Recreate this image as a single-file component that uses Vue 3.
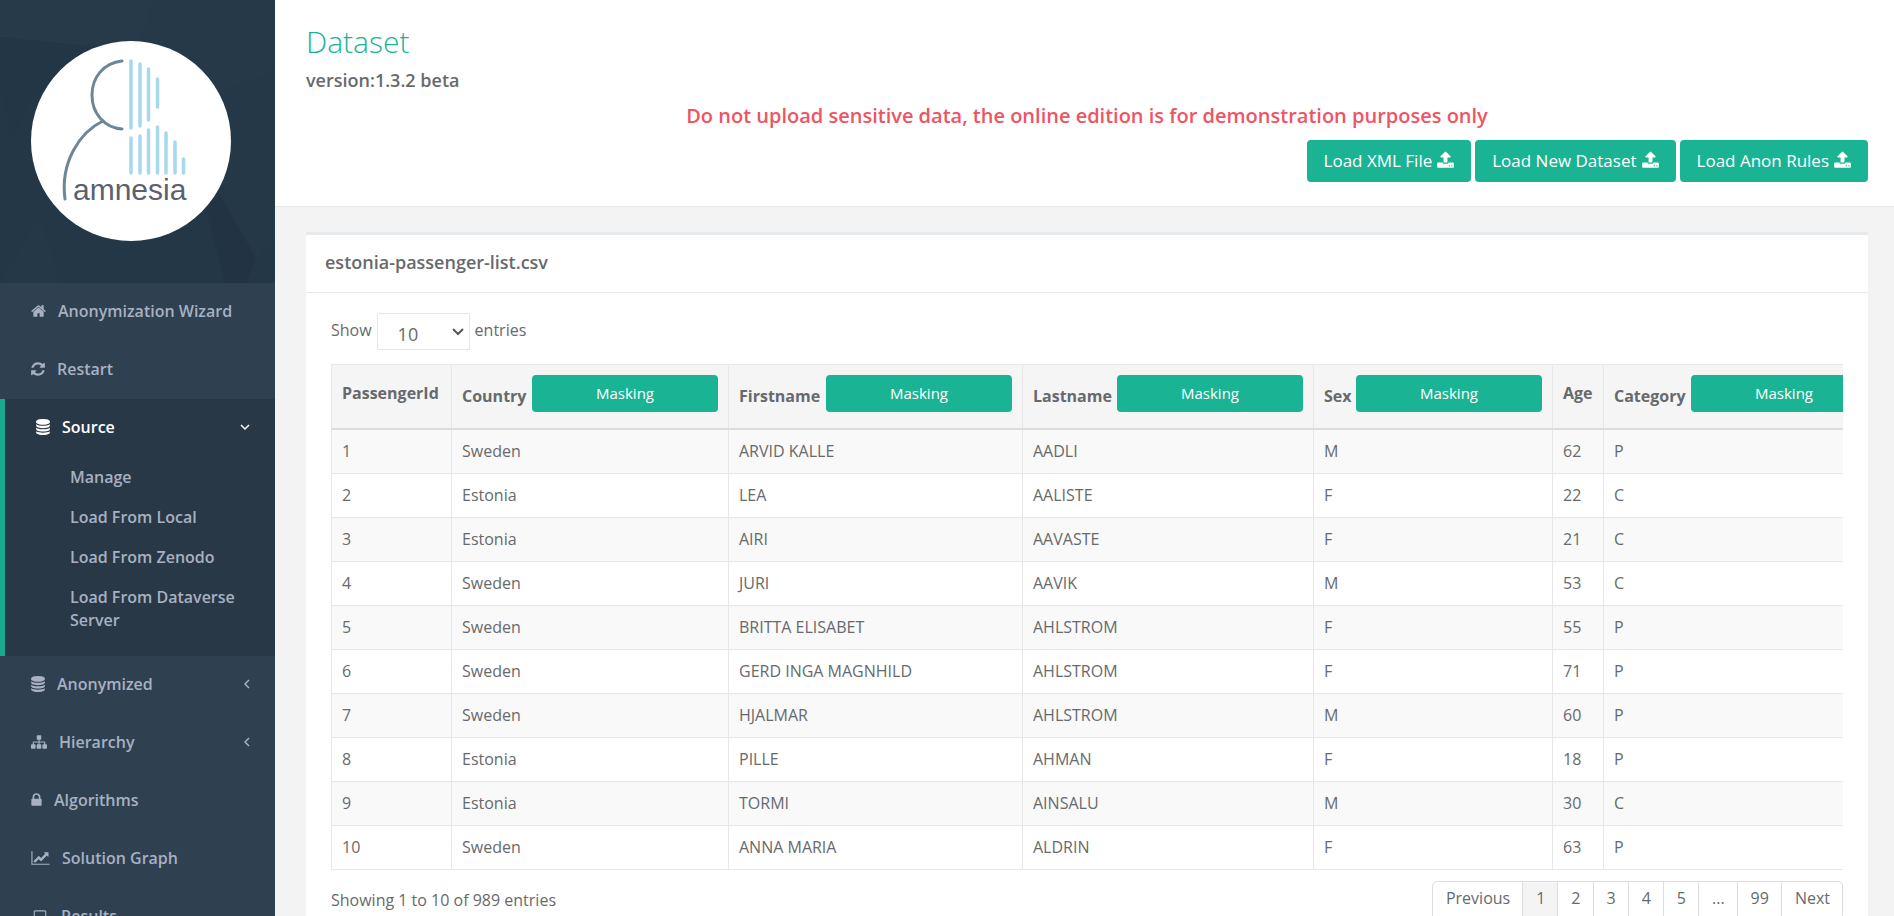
<script setup>
import { ref } from 'vue'

const icons = {
  home: {
    box: '64 0 1664 1792', w: 15,
    d: 'M1472 992v480q0 26-19 45t-45 19h-384v-384h-256v384h-384q-26 0-45-19t-19-45v-480q0-1 .5-3t.5-3l575-474 575 474q1 2 1 6zm223-69l-62 74q-8 9-21 11h-3q-13 0-21-7l-692-577-692 577q-12 8-24 7-13-2-21-11l-62-74q-8-10-7-23.5t11-21.5l719-599q32-26 76-26t76 26l244 204v-195q0-14 9-23t23-9h192q14 0 23 9t9 23v408l219 182q10 8 11 21.5t-7 23.5z',
  },
  refresh: {
    box: '128 0 1536 1792', w: 14,
    d: 'M1639 1056q0 5-1 7-64 268-268 434.5t-478 166.5q-146 0-282.5-55t-243.5-157l-129 129q-19 19-45 19t-45-19-19-45v-448q0-26 19-45t45-19h448q26 0 45 19t19 45-19 45l-137 137q71 66 161 102t187 36q134 0 250-65t186-179q11-17 53-117 8-23 30-23h192q13 0 22.5 9.5t9.5 22.5zm25-800v448q0 26-19 45t-45 19h-448q-26 0-45-19t-19-45 19-45l138-138q-148-137-349-137-134 0-250 65t-186 179q-11 17-53 117-8 23-30 23h-199q-13 0-22.5-9.5t-9.5-22.5v-7q65-268 270-434.5t480-166.5q146 0 284 55.5t245 156.5l130-129q19-19 45-19t45 19 19 45z',
  },
  database: {
    box: '128 0 1536 1792', w: 14,
    d: 'M896 768q237 0 443-43t325-127v170q0 69-103 128t-280 93.5-385 34.5-385-34.5-280-93.5-103-128v-170q119 84 325 127t443 43zm0 768q237 0 443-43t325-127v170q0 69-103 128t-280 93.5-385 34.5-385-34.5-280-93.5-103-128v-170q119 84 325 127t443 43zm0-384q237 0 443-43t325-127v170q0 69-103 128t-280 93.5-385 34.5-385-34.5-280-93.5-103-128v-170q119 84 325 127t443 43zm0-1152q208 0 385 34.5t280 93.5 103 128v128q0 69-103 128t-280 93.5-385 34.5-385-34.5-280-93.5-103-128v-128q0-69 103-128t280-93.5 385-34.5z',
  },
  sitemap: {
    box: '0 0 1792 1792', w: 16,
    d: 'M1792 1248v320q0 40-28 68t-68 28h-320q-40 0-68-28t-28-68v-320q0-40 28-68t68-28h96v-192h-512v192h96q40 0 68 28t28 68v320q0 40-28 68t-68 28h-320q-40 0-68-28t-28-68v-320q0-40 28-68t68-28h96v-192h-512v192h96q40 0 68 28t28 68v320q0 40-28 68t-68 28h-320q-40 0-68-28t-28-68v-320q0-40 28-68t68-28h96v-192q0-52 38-90t90-38h512v-192h-96q-40 0-68-28t-28-68v-320q0-40 28-68t68-28h320q40 0 68 28t28 68v320q0 40-28 68t-68 28h-96v192h512q52 0 90 38t38 90v192h96q40 0 68 28t28 68z',
  },
  lock: {
    box: '320 0 1152 1792', w: 11,
    d: 'M640 768h512v-192q0-106-75-181t-181-75-181 75-75 181v192zm832 96v576q0 40-28 68t-68 28h-960q-40 0-68-28t-28-68v-576q0-40 28-68t68-28h32v-192q0-184 132-316t316-132 316 132 132 316v192h32q40 0 68 28t28 68z',
  },
  chart: {
    box: '0 0 2048 1792', w: 19,
    d: 'M2048 1536v128h-2048v-1536h128v1408h1920zm-128-1248v435q0 21-19.5 29.5t-35.5-7.5l-121-121-633 633q-10 10-23 10t-23-10l-233-233-416 416-192-192 585-585q10-10 23-10t23 10l233 233 464-464-121-121q-16-16-7.5-35.5t29.5-19.5h435q14 0 23 9t9 23z',
  },
  laptop: {
    box: '0 0 1920 1792', w: 18,
    d: 'M416 1280q-66 0-113-47t-47-113v-704q0-66 47-113t113-47h1088q66 0 113 47t47 113v704q0 66-47 113t-113 47h-1088zm-32-864v704q0 13 9.5 22.5t22.5 9.5h1088q13 0 22.5-9.5t9.5-22.5v-704q0-13-9.5-22.5t-22.5-9.5h-1088q-13 0-22.5 9.5t-9.5 22.5zm1376 928h160v96q0 40-47 68t-113 28h-1600q-66 0-113-28t-47-68v-96h1760z',
  },
}
const uploadPath = 'M1344 1472q0-26-19-45t-45-19-45 19-19 45 19 45 45 19 45-19 19-45zm256 0q0-26-19-45t-45-19-45 19-19 45 19 45 45 19 45-19 19-45zm128-224v320q0 40-28 68t-68 28h-1472q-40 0-68-28t-28-68v-320q0-40 28-68t68-28h427q21 56 70.5 92t110.5 36h256q61 0 110.5-36t70.5-92h427q40 0 68 28t28 68zm-325-648q-17 40-59 40h-256v448q0 26-19 45t-45 19h-256q-26 0-45-19t-19-45v-448h-256q-42 0-59-40-17-39 14-69l448-448q18-19 45-19t45 19l448 448q31 30 14 69z'

const nav = [
  { label: 'Anonymization Wizard', icon: 'home' },
  { label: 'Restart', icon: 'refresh' },
  {
    label: 'Source', icon: 'database', active: true,
    children: ['Manage', 'Load From Local', 'Load From Zenodo', 'Load From Dataverse Server'],
  },
  { label: 'Anonymized', icon: 'database', more: true },
  { label: 'Hierarchy', icon: 'sitemap', more: true },
  { label: 'Algorithms', icon: 'lock' },
  { label: 'Solution Graph', icon: 'chart' },
  { label: 'Results', icon: 'laptop' },
]

const loaders = ['Load XML File', 'Load New Dataset', 'Load Anon Rules']

const columns = [
  { name: 'PassengerId', cls: 'c-id' },
  { name: 'Country', cls: 'c-country', mask: true },
  { name: 'Firstname', cls: 'c-first', mask: true },
  { name: 'Lastname', cls: 'c-last', mask: true },
  { name: 'Sex', cls: 'c-sex', mask: true },
  { name: 'Age', cls: 'c-age' },
  { name: 'Category', cls: 'c-category', mask: true },
]

const rows = [
  [1, 'Sweden', 'ARVID KALLE', 'AADLI', 'M', 62, 'P'],
  [2, 'Estonia', 'LEA', 'AALISTE', 'F', 22, 'C'],
  [3, 'Estonia', 'AIRI', 'AAVASTE', 'F', 21, 'C'],
  [4, 'Sweden', 'JURI', 'AAVIK', 'M', 53, 'C'],
  [5, 'Sweden', 'BRITTA ELISABET', 'AHLSTROM', 'F', 55, 'P'],
  [6, 'Sweden', 'GERD INGA MAGNHILD', 'AHLSTROM', 'F', 71, 'P'],
  [7, 'Sweden', 'HJALMAR', 'AHLSTROM', 'M', 60, 'P'],
  [8, 'Estonia', 'PILLE', 'AHMAN', 'F', 18, 'P'],
  [9, 'Estonia', 'TORMI', 'AINSALU', 'M', 30, 'C'],
  [10, 'Sweden', 'ANNA MARIA', 'ALDRIN', 'F', 63, 'P'],
]

const pages = ['Previous', '1', '2', '3', '4', '5', '...', '99', 'Next']
const pageSize = ref('10')
</script>

<template>
  <div class="layout">
    <nav class="sidebar" aria-label="Main menu">
      <div class="brand">
        <svg class="facets" viewBox="0 0 275 283" preserveAspectRatio="none" aria-hidden="true">
          <rect width="275" height="283" fill="#243746" />
          <path d="M0 0H155L140 45L95 47L0 37Z" fill="#273a49" />
          <path d="M155 0H275V70L215 95L140 45Z" fill="#263949" />
          <path d="M275 70V207L220 200L200 100Z" fill="#253848" />
          <path d="M0 37L95 47L30 100L12 140L0 85Z" fill="#233645" />
          <path d="M205 205L220 195L256 258L246 283H225Z" fill="#223444" />
          <path d="M220 195L275 175V240L256 258Z" fill="#253847" />
          <path d="M0 283L40 215L60 283Z" fill="#253847" />
        </svg>
        <svg class="logo" viewBox="0 0 200 200" role="img" aria-label="amnesia">
          <circle cx="100" cy="100" r="100" fill="#fff" />
          <g fill="none" stroke="#6b8798" stroke-width="3" stroke-linecap="round">
            <path d="M91 20C72 22 61 37 61 54C61 73 74 87 91 88" />
            <path d="M72 80C49 91 29 121 34 158" />
          </g>
          <g stroke="#a6d8ee" stroke-width="3.500" stroke-linecap="round">
            <path d="M100 20V87M109 23V85M117.500 28V79M126.500 38V66" />
            <path d="M100 97V132M109 95V132M117.500 89V132M126.500 86V132M135 92V132M144 101V132M152.500 118V132" />
          </g>
          <text x="42" y="159" class="logo-text">amnesia</text>
        </svg>
      </div>
      <ul class="menu">
        <li v-for="item in nav" :key="item.label" :class="{ active: item.active }">
          <a href="#" class="menu-link">
            <svg class="icon" :width="icons[item.icon].w" height="16" :viewBox="icons[item.icon].box" aria-hidden="true">
              <path :d="icons[item.icon].d" />
            </svg>
            <span>{{ item.label }}</span>
            <svg v-if="item.active" class="arrow" width="10" height="10" viewBox="0 0 10 10" aria-hidden="true">
              <path d="M1 3L5 7L9 3" />
            </svg>
            <svg v-else-if="item.more" class="arrow" width="6" height="10" viewBox="0 0 6 10" aria-hidden="true">
              <path d="M5 1L1 5L5 9" />
            </svg>
          </a>
          <ul v-if="item.children" class="submenu">
            <li v-for="child in item.children" :key="child"><a href="#">{{ child }}</a></li>
          </ul>
        </li>
      </ul>
    </nav>

    <main class="page">
      <header class="heading">
        <h1>Dataset</h1>
        <p class="version">version:1.3.2 beta</p>
        <p class="warning">Do not upload sensitive data, the online edition is for demonstration purposes only</p>
        <div class="actions">
          <button v-for="text in loaders" :key="text" type="button" class="btn">
            <span>{{ text }}</span>
            <svg width="17" height="18" viewBox="64 0 1664 1792" aria-hidden="true"><path :d="uploadPath" /></svg>
          </button>
        </div>
      </header>

      <section class="panel">
        <h2>estonia-passenger-list.csv</h2>
        <div class="panel-body">
          <div class="length">
            <label for="page-size">Show</label>
            <span class="select-box">
              <select id="page-size" v-model="pageSize">
                <option>10</option>
                <option>25</option>
                <option>50</option>
              </select>
              <svg width="12" height="8" viewBox="0 0 12 8" aria-hidden="true"><path d="M1 1L6 6L11 1" /></svg>
            </span>
            <span>entries</span>
          </div>

          <div class="table-wrap">
            <table>
              <colgroup>
                <col v-for="c in columns" :key="c.name" :class="c.cls" />
              </colgroup>
              <thead>
                <tr>
                  <th v-for="c in columns" :key="c.name" scope="col">
                    <div class="head" :class="{ masked: c.mask }">
                      <span>{{ c.name }}</span>
                      <button v-if="c.mask" type="button" class="mask">Masking</button>
                    </div>
                  </th>
                </tr>
              </thead>
              <tbody>
                <tr v-for="row in rows" :key="row[0]">
                  <td v-for="(cell, i) in row" :key="i">{{ cell }}</td>
                </tr>
              </tbody>
            </table>
          </div>

          <div class="table-foot">
            <p>Showing 1 to 10 of 989 entries</p>
            <ul class="pages">
              <li v-for="p in pages" :key="p"><a href="#" :class="{ current: p === '1' }">{{ p }}</a></li>
            </ul>
          </div>
        </div>
      </section>
    </main>
  </div>
</template>

<style>
body {
  margin: 0;
  background: #f3f3f4;
}
</style>

<style scoped>
.layout {
  display: flex;
  height: 100vh;
  overflow: hidden;
  font-family: "Open Sans", "Liberation Sans", sans-serif;
  font-size: 16px;
  line-height: 23px;
  color: #676a6c;
  background: #f3f3f3;
}
h1, h2, p, ul {
  margin: 0;
  padding: 0;
}
ul {
  list-style: none;
}
a {
  color: inherit;
  text-decoration: none;
}
button, select {
  font-family: inherit;
}

.sidebar {
  flex: 0 0 275px;
  background: #2f4050;
  color: #a7b1c2;
  font-weight: 600;
}
.brand {
  position: relative;
  padding: 41px 31px 42px;
}
.facets {
  position: absolute;
  inset: 0;
  width: 100%;
  height: 100%;
}
.logo {
  position: relative;
  display: block;
  width: 200px;
  height: 200px;
}
.logo-text {
  font-family: "Liberation Sans", sans-serif;
  font-size: 30px;
  font-weight: 400;
  fill: #5b5f70;
}
.menu-link {
  display: flex;
  align-items: center;
  gap: 12px;
  height: 56px;
  padding: 0 25px 2px 31px;
}
.icon {
  fill: currentColor;
}
.arrow {
  margin-left: auto;
  fill: none;
  stroke: currentColor;
  stroke-width: 1.5;
}
.active {
  border-left: 5px solid #19aa8d;
  background: #293846;
}
.active > .menu-link {
  color: #fff;
}
.submenu {
  padding: 1px 0 15px;
}
.submenu a {
  display: block;
  padding: 8px 25px 9px 65px;
}

.page {
  flex: 1;
  min-width: 0;
}
.heading {
  padding: 24px 26px;
  border-bottom: 1px solid #e7eaec;
  background: #fff;
}
.heading h1,
.version,
.warning {
  margin-left: 5px;
}
h1 {
  color: #1ab394;
  font-size: 30px;
  font-weight: 300;
  line-height: 36px;
}
.version {
  margin-top: 8px;
  font-size: 18px;
  font-weight: 600;
  line-height: 24px;
}
.warning {
  margin-top: 10px;
  margin-bottom: 10px;
  color: #ed5565;
  font-size: 20px;
  font-weight: 600;
  line-height: 28px;
  text-align: center;
}
.actions {
  display: flex;
  justify-content: flex-end;
  gap: 4px;
}
.btn {
  display: flex;
  align-items: center;
  gap: 5px;
  height: 42px;
  padding: 0 17px 2px;
  border: 0;
  border-radius: 4px;
  background: #1ab394;
  color: #fff;
  font-size: 17px;
}
.btn svg {
  fill: #fff;
}

.panel {
  margin: 25px 26px 0 31px;
  border-top: 3px solid #e7eaec;
  background: #fff;
}
h2 {
  padding: 15px 19px 17px;
  border-bottom: 1px solid #e7eaec;
  font-size: 18px;
  font-weight: 600;
  line-height: 25px;
}
.panel-body {
  padding: 20px 25px 25px;
}
.length {
  display: flex;
  align-items: center;
  gap: 5px;
  height: 37px;
  margin-bottom: 14px;
}
.length label,
.length > span:last-child {
  padding-bottom: 3px;
}
.select-box {
  position: relative;
}
select {
  display: block;
  width: 93px;
  height: 37px;
  padding: 5px 20px 0;
  border: 1px solid #e5e6e7;
  border-radius: 1px;
  appearance: none;
  background: #fff;
  color: inherit;
  font-size: 18px;
}
.select-box svg {
  position: absolute;
  top: 15px;
  right: 6px;
  fill: none;
  stroke: #55585a;
  stroke-width: 2;
  pointer-events: none;
}

.table-wrap {
  overflow: hidden;
}
table {
  width: 1557px;
  table-layout: fixed;
  border-collapse: collapse;
}
.c-id { width: 120px; }
.c-country { width: 277px; }
.c-first { width: 294px; }
.c-last { width: 291px; }
.c-sex { width: 239px; }
.c-age { width: 51px; }
th, td {
  border: 1px solid #e7e7e7;
  text-align: left;
  white-space: nowrap;
}
th {
  padding: 10px 10px 16px;
  border-bottom: 2px solid #ddd;
  background: #f5f5f6;
  font-weight: 700;
}
td {
  padding: 10px;
}
tbody tr:nth-child(odd) {
  background: #f9f9f9;
}
.head {
  display: flex;
  align-items: center;
  justify-content: space-between;
  height: 37px;
}
.head.masked span {
  padding-top: 6px;
}
.mask {
  width: 186px;
  height: 37px;
  padding: 0 0 2px;
  border: 0;
  border-radius: 4px;
  background: #1ab394;
  color: #fff;
  font-size: 15px;
}

.table-foot {
  display: flex;
  justify-content: space-between;
  align-items: flex-start;
  padding-top: 11px;
}
.table-foot p {
  padding-top: 8px;
}
.pages {
  display: flex;
  border: 1px solid #ddd;
  border-radius: 5px;
  overflow: hidden;
}
.pages a {
  display: block;
  padding: 5px 12px 9px 13px;
}
.pages li + li {
  border-left: 1px solid #ddd;
}
.current {
  background: #f4f4f4;
}
</style>
